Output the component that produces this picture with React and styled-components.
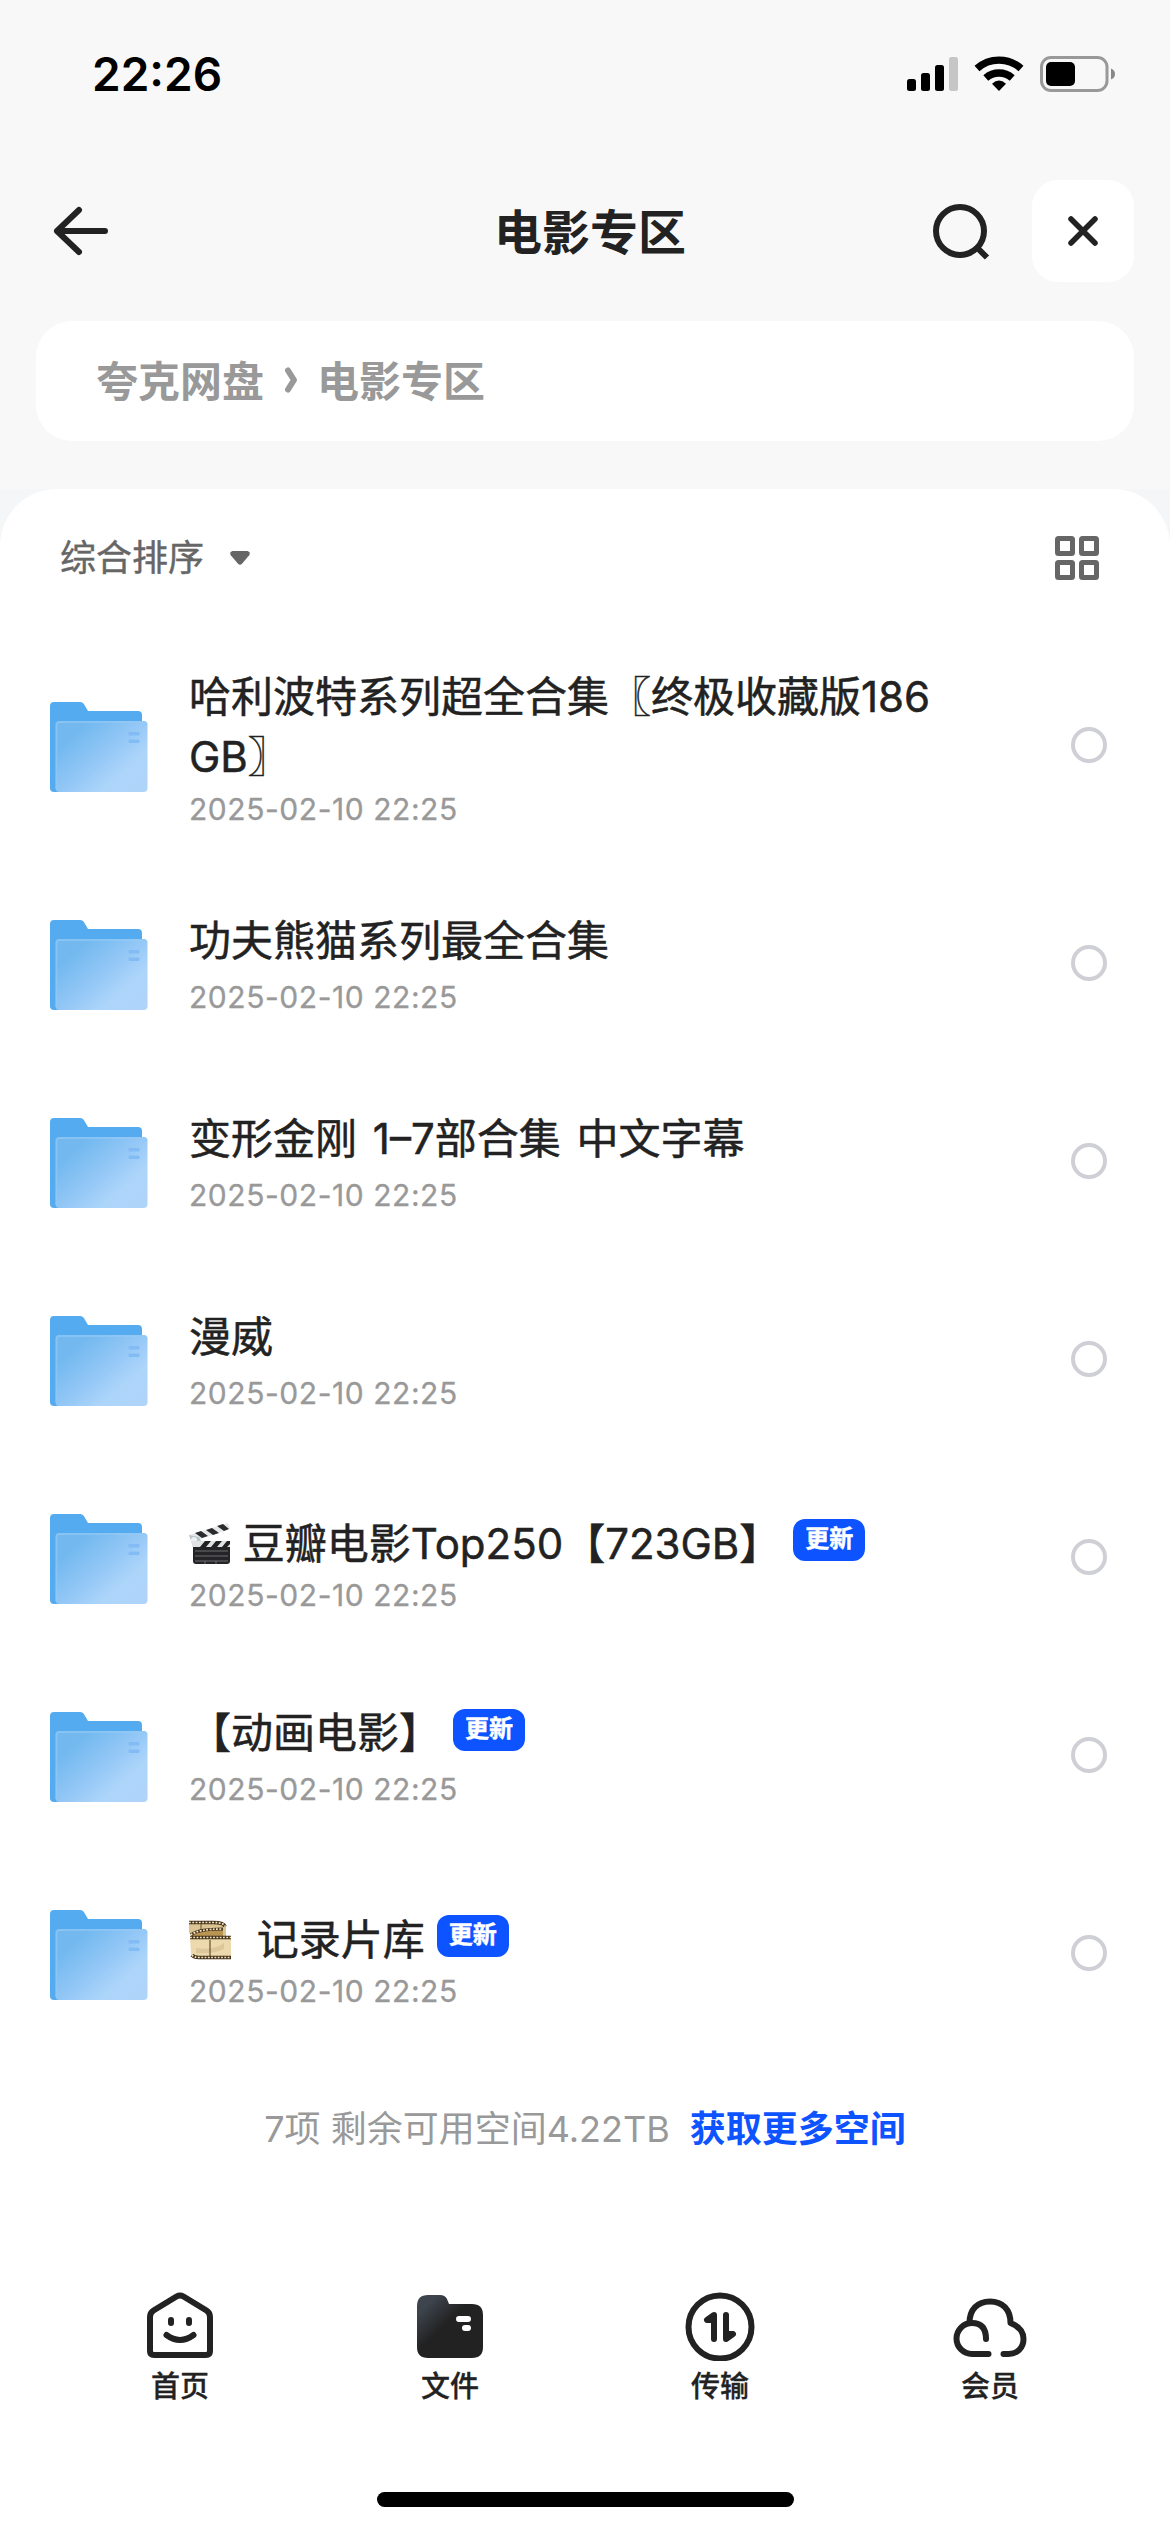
import React from 'react';
import styled, { createGlobalStyle } from 'styled-components';

const GlobalStyle = createGlobalStyle`
  * {
    box-sizing: border-box;
  }
  body {
    margin: 0;
    background: #fff;
    color: #222;
    font-family: Inter, 'Noto Sans CJK SC', sans-serif;
  }
  svg {
    display: block;
    flex-shrink: 0;
  }
  button {
    display: flex;
    padding: 0;
    border: none;
    background: none;
    color: inherit;
    font: inherit;
  }
`;

const Screen = styled.div`
  display: flex;
  flex-direction: column;
  width: 1170px;
  height: 2532px;
  overflow: hidden;
  background: #f8f8f8;
`;

const StatusBar = styled.header`
  display: flex;
  justify-content: space-between;
  height: 141px;
  padding: 55px 54px 0 92px;
  color: #000;
`;

const Clock = styled.span`
  font-size: 46px;
  font-weight: 600;
  line-height: 38px;
`;

const NavBar = styled.nav`
  display: grid;
  grid-template-columns: 1fr auto 1fr;
  align-items: center;
  height: 180px;
  padding: 0 36px;
`;

const BackButton = styled.button`
  margin-left: 16px;
`;

const Title = styled.h1`
  margin: 0;
  padding: 3px 0 0 10px;
  font-size: 48px;
  font-weight: 700;
  line-height: 60px;
`;

const NavActions = styled.div`
  display: flex;
  justify-content: flex-end;
  align-items: center;
  gap: 40px;
`;

const CloseButton = styled.button`
  align-items: center;
  justify-content: center;
  width: 102px;
  height: 102px;
  border-radius: 26px;
  background: #fff;
`;

const Breadcrumb = styled.div`
  display: flex;
  align-items: center;
  height: 120px;
  margin: 0 36px 48px;
  padding: 0 0 6px 60px;
  border-radius: 36px;
  background: #fff;
  color: #999;
  font-size: 42px;
  font-weight: 700;
  svg {
    margin: 4px 18px 0 19px;
  }
`;

const PanelWrap = styled.div`
  display: flex;
  flex: 1;
  background: #f5f6f8;
`;

const Panel = styled.main`
  display: flex;
  flex: 1;
  flex-direction: column;
  border-radius: 57px 57px 0 0;
  background: #fff;
`;

const SortBar = styled.div`
  display: flex;
  align-items: center;
  justify-content: space-between;
  height: 137px;
  margin-bottom: 2px;
  padding: 0 71px 0 60px;
  color: #666;
`;

const SortButton = styled.button`
  align-items: center;
  gap: 25px;
  font-size: 36px;
  line-height: 44px;
  -webkit-text-stroke: 0.4px;
`;

const Row = styled.div`
  display: flex;
  align-items: center;
  height: ${({ $tall }) => ($tall ? 238 : 198)}px;
  padding: 0 63px 0 50px;
`;

const RowText = styled.div`
  flex: 1;
  margin-left: 40px;
  padding-top: ${({ $emoji, $tall }) => ($emoji ? 10 : $tall ? 2 : 0)}px;
  padding-bottom: ${({ $emoji, $tall }) => ($emoji || $tall ? 0 : 3)}px;
`;

const Name = styled.div`
  display: flex;
  align-items: center;
  height: ${({ $lines }) => ($lines || 1) * 60}px;
  color: #222;
  font-size: 42px;
  line-height: 60px;
  white-space: pre;
  word-spacing: ${({ $wordGap }) => $wordGap || 0}px;
  -webkit-text-stroke: 0.5px;
`;

const Stamp = styled.div`
  margin-top: ${({ $gap }) => $gap}px;
  color: #999;
  font-size: 30px;
  line-height: 40px;
  letter-spacing: 0.55px;
  -webkit-text-stroke: 0.3px;
`;

const UpdateBadge = styled.span`
  width: 72px;
  height: 42px;
  margin: ${({ $raised }) => ($raised ? -8 : -5)}px 0 0 12px;
  border-radius: 12px;
  background: #0d53ff;
  color: #fff;
  font-size: 24px;
  font-weight: 700;
  line-height: 40px;
  text-align: center;
`;

const Radio = styled.span`
  width: 36px;
  height: 36px;
  margin-top: -4px;
  border: 4px solid #cfcfd6;
  border-radius: 50%;
`;

const Summary = styled.div`
  display: flex;
  align-items: center;
  justify-content: center;
  gap: 20px;
  height: 143px;
  color: #999;
  font-size: 36px;
  a {
    color: #0d53ff;
    font-weight: 700;
  }
`;

const TabBar = styled.footer`
  display: grid;
  grid-template-columns: repeat(4, 1fr);
  margin-top: 92px;
  padding: 0 45px;
`;

const Tab = styled.button`
  flex-direction: column;
  align-items: center;
  gap: 6px;
  font-size: 29px;
  font-weight: 500;
  line-height: 40px;
  -webkit-text-stroke: 0.3px;
`;

const HomeIndicator = styled.div`
  width: 417px;
  height: 15px;
  margin: auto auto 25px;
  border-radius: 8px;
  background: #000;
`;

const StatusIcons = () => (
  <svg width="209" height="38" viewBox="907 55 209 38">
    <rect x="907" y="79" width="9" height="12" rx="2.5" />
    <rect x="921" y="73" width="9" height="18" rx="2.5" />
    <rect x="935" y="65" width="9" height="26" rx="2.5" />
    <rect x="949" y="57" width="9" height="34" rx="2.5" fill="#c6c6c6" />
    <g fill="none" stroke="#000" strokeWidth="7.4">
      <path d="M977 68.5a33 33 0 0 1 44 0" />
      <path d="M985.8 78a20 20 0 0 1 26.4 0" />
    </g>
    <path d="M999 91l-7-7.3q7-6.400 14 0z" />
    <rect x="1041.5" y="57.5" width="65.5" height="33" rx="9.5" fill="none" stroke="#999" strokeWidth="3" />
    <rect x="1046" y="62" width="29" height="24" rx="5" />
    <path d="M1111 68.500q4 1.500 4 5.500t-4 5.500z" fill="#888" />
  </svg>
);

const BackIcon = () => (
  <svg width="58" height="54" viewBox="0 0 58 54" fill="none" stroke="#222" strokeWidth="6" strokeLinecap="round" strokeLinejoin="round">
    <path d="M27 6L5 27l22 21M5 27h48" />
  </svg>
);

const SearchIcon = () => (
  <svg width="60" height="60" viewBox="0 0 60 60" fill="none" stroke="#222" strokeWidth="6">
    <circle cx="28" cy="30" r="24" />
    <path d="M45 46.5L55 56.5" />
  </svg>
);

const CloseIcon = () => (
  <svg width="32" height="32" viewBox="0 0 32 32" fill="none" stroke="#222" strokeWidth="5.5" strokeLinecap="round">
    <path d="M4 4l24 24M28 4L4 28" />
  </svg>
);

const ChevronIcon = () => (
  <svg width="16" height="28" viewBox="0 0 16 28" fill="none" stroke="#999" strokeWidth="6" strokeLinecap="round" strokeLinejoin="round">
    <path d="M5 4.500l6 9.500-6 9.500" />
  </svg>
);

const CaretIcon = () => (
  <svg width="22" height="16" viewBox="0 0 22 16" fill="#666">
    <path d="M3.5 1h15q3.500 1 1.700 4.300L13 13.700q-2 2-4 0L1.800 5.300Q0 2 3.500 1z" />
  </svg>
);

const GridIcon = () => (
  <svg width="44" height="44" viewBox="0 0 44 44" fill="none" stroke="#666" strokeWidth="5">
    <rect x="2.5" y="2.5" width="15" height="15" rx="1" />
    <rect x="26.5" y="2.5" width="15" height="15" rx="1" />
    <rect x="2.5" y="26.5" width="15" height="15" rx="1" />
    <rect x="26.5" y="26.5" width="15" height="15" rx="1" />
  </svg>
);

const FolderIcon = () => (
  <svg width="99" height="90" viewBox="0 0 99 90">
    <defs>
      <linearGradient id="folderFront" x1="0.1" y1="0.15" x2="0.9" y2="0.85">
        <stop offset="0.1" stopColor="#73b9ef" />
        <stop offset="0.5" stopColor="#93c7f6" />
        <stop offset="0.8" stopColor="#add5fa" />
        <stop offset="1" stopColor="#aed4fa" />
      </linearGradient>
    </defs>
    <path d="M4 0h26q3 0 4.500 3L38 9h50q4 0 4 4v30L9 90H4q-4 0-4-4V4q0-4 4-4z" fill="#55abef" />
    <rect x="5.5" y="19" width="92" height="71" rx="4" fill="url(#folderFront)" />
    <path d="M6.500 87V23q0-3 3-3h84q3 0 3 3" fill="none" stroke="#94c9f5" strokeWidth="2" opacity="0.6" />
    <rect x="78.5" y="30" width="11" height="3.5" rx="1" fill="#83bcf5" />
    <rect x="78.5" y="37.5" width="11" height="3.5" rx="1" fill="#83bcf5" />
  </svg>
);

const ClapperIcon = () => (
  <svg width="42" height="42" viewBox="0 0 42 42">
    <path d="M0 12L39 0l2 6L3 19z" fill="#e4e8e8" />
    <path d="M6 10l7 5 6-2-7-5zM17 7l7 5 6-2-7-5zM28 3l7 5 5-2-6-5z" fill="#2b2b2d" />
    <path d="M0 12l10 2 3 6-9 4z" fill="#b9c5ca" />
    <circle cx="5" cy="17" r="3" fill="#edf1f2" />
    <path d="M3 18h38v6H3z" fill="#dfe3e3" />
    <path d="M11 24l5-6h6l-5 6zM22 24l5-6h6l-5 6zM33 24l5-6h3v3l-3 3z" fill="#222" />
    <path d="M4 24h37v14q0 3-3 3H7q-3 0-3-3z" fill="#242426" />
    <path d="M6 28h33M6 33h33M6 38h33M16 38v3M27 38v3" stroke="#77797b" strokeWidth="0.9" />
  </svg>
);

const FilmIcon = () => (
  <svg width="42" height="40" viewBox="0 0 42 40">
    <path d="M0 1h24q14 0 13 8v7L2 17V14L0 13z" fill="#dcc594" />
    <path d="M12 3v9" stroke="#6c5534" strokeWidth="1" />
    <path d="M2 14Q8 8 34 8v10H2z" fill="#b99553" />
    <path d="M1 17h41v22H9q-7 0-7-5z" fill="#ecd9ad" />
    <path d="M7 28q17 3 28-5v6q-9 5-28 4z" fill="#dcc89b" />
    <path d="M21 20v16" stroke="#62502f" strokeWidth="1.2" />
    <g fill="none" stroke="#46331b" strokeWidth="3.6">
      <path d="M0 2.500h24q11 0 12 4" />
      <path d="M2 15Q8 9 34 9" strokeWidth="3.2" />
      <path d="M1 17.500h41M3 35q2 2.500 7 2.500h32" />
    </g>
    <g fill="none" stroke="#f4e6c2" strokeWidth="1.7" strokeDasharray="1.8 1.5">
      <path d="M0 2.500h24q11 0 12 4" />
      <path d="M2 15Q8 9 34 9" />
      <path d="M1 17.500h41M3 35q2 2.500 7 2.500h32" />
    </g>
  </svg>
);

const HomeIcon = () => (
  <svg width="72" height="72" viewBox="0 0 72 72" fill="none" stroke="#222" strokeWidth="6" strokeLinecap="round" strokeLinejoin="round">
    <path d="M32.500 7.500L9.500 21.500Q6 23.700 6 28v34q0 4 4 4h52q4 0 4-4V28q0-4.300-3.500-6.500l-23-14q-3.500-2-7 0z" />
    <path d="M27 31v3M45 31v3M22.500 46q13.500 10 27 0" />
  </svg>
);

const FilesIcon = () => (
  <svg width="72" height="72" viewBox="0 0 72 72">
    <defs>
      <linearGradient id="filesFill" x1="0" y1="0.05" x2="0.65" y2="0.7">
        <stop offset="0.2" stopColor="#3d444d" />
        <stop offset="0.65" stopColor="#222" />
      </linearGradient>
    </defs>
    <path d="M14 6h12q5 0 7 4l2 5H58q11 0 11 11v32q0 11-11 11H14Q3 69 3 58V17Q3 6 14 6z" fill="url(#filesFill)" />
    <path d="M45 30h9M51 39h3" stroke="#fff" strokeWidth="6" strokeLinecap="round" />
  </svg>
);

const TransferIcon = () => (
  <svg width="72" height="72" viewBox="0 0 72 72" fill="none" stroke="#222" strokeWidth="6" strokeLinecap="round" strokeLinejoin="round">
    <circle cx="36" cy="38" r="31.5" />
    <path d="M30 50V26l-7 5h7M42 26v24l7-5h-7" />
  </svg>
);

const MemberIcon = () => (
  <svg width="78" height="72" viewBox="0 0 78 72" fill="none" stroke="#222" strokeWidth="6" strokeLinecap="round" strokeLinejoin="round">
    <path d="M37.500 65H21a15.500 15.500 0 1 1 0-31q14 0 14 16" />
    <path d="M18.500 34C18.500 20.500 26.500 12.500 39 12.500S59.500 20.500 59.500 34C67.500 37 72.500 42.500 72.500 50C72.500 59 66 65 57.500 65H52.500" />
  </svg>
);

const files = [
  { name: '哈利波特系列超全合集〖终极收藏版186\nGB〗', lines: 2 },
  { name: '功夫熊猫系列最全合集' },
  { name: '变形金刚 1–7部合集 中文字幕', wordGap: 4 },
  { name: '漫威' },
  { name: ' 豆瓣电影Top250【723GB】', emoji: <ClapperIcon />, updated: true },
  { name: '【动画电影】', updated: true },
  { name: '  记录片库', emoji: <FilmIcon />, wordGap: 1, updated: true },
];

const tabs = [
  { label: '首页', icon: <HomeIcon /> },
  { label: '文件', icon: <FilesIcon /> },
  { label: '传输', icon: <TransferIcon /> },
  { label: '会员', icon: <MemberIcon /> },
];

const FileRow = ({ name, lines, emoji, wordGap, updated }) => (
  <Row $tall={lines > 1}>
    <FolderIcon />
    <RowText $emoji={!!emoji} $tall={lines > 1}>
      <Name $lines={lines} $wordGap={wordGap}>
        {emoji}
        <span>{name}</span>
        {updated && <UpdateBadge $raised={!!emoji}>更新</UpdateBadge>}
      </Name>
      <Stamp $gap={emoji ? 1 : lines > 1 ? 2 : 6}>2025-02-10 22:25</Stamp>
    </RowText>
    <Radio />
  </Row>
);

const App = () => (
  <>
    <GlobalStyle />
    <Screen lang="zh-CN">
      <StatusBar>
        <Clock>22:26</Clock>
        <StatusIcons />
      </StatusBar>
      <NavBar>
        <BackButton>
          <BackIcon />
        </BackButton>
        <Title>电影专区</Title>
        <NavActions>
          <SearchIcon />
          <CloseButton>
            <CloseIcon />
          </CloseButton>
        </NavActions>
      </NavBar>
      <Breadcrumb>
        <span>夸克网盘</span>
        <ChevronIcon />
        <span>电影专区</span>
      </Breadcrumb>
      <PanelWrap>
        <Panel>
          <SortBar>
            <SortButton>
              综合排序
              <CaretIcon />
            </SortButton>
            <GridIcon />
          </SortBar>
          {files.map(file => (
            <FileRow key={file.name} {...file} />
          ))}
          <Summary>
            <span>7项 剩余可用空间4.22TB</span>
            <a>获取更多空间</a>
          </Summary>
          <TabBar>
            {tabs.map(({ label, icon }) => (
              <Tab key={label}>
                {icon}
                {label}
              </Tab>
            ))}
          </TabBar>
          <HomeIndicator />
        </Panel>
      </PanelWrap>
    </Screen>
  </>
);

export default App;
